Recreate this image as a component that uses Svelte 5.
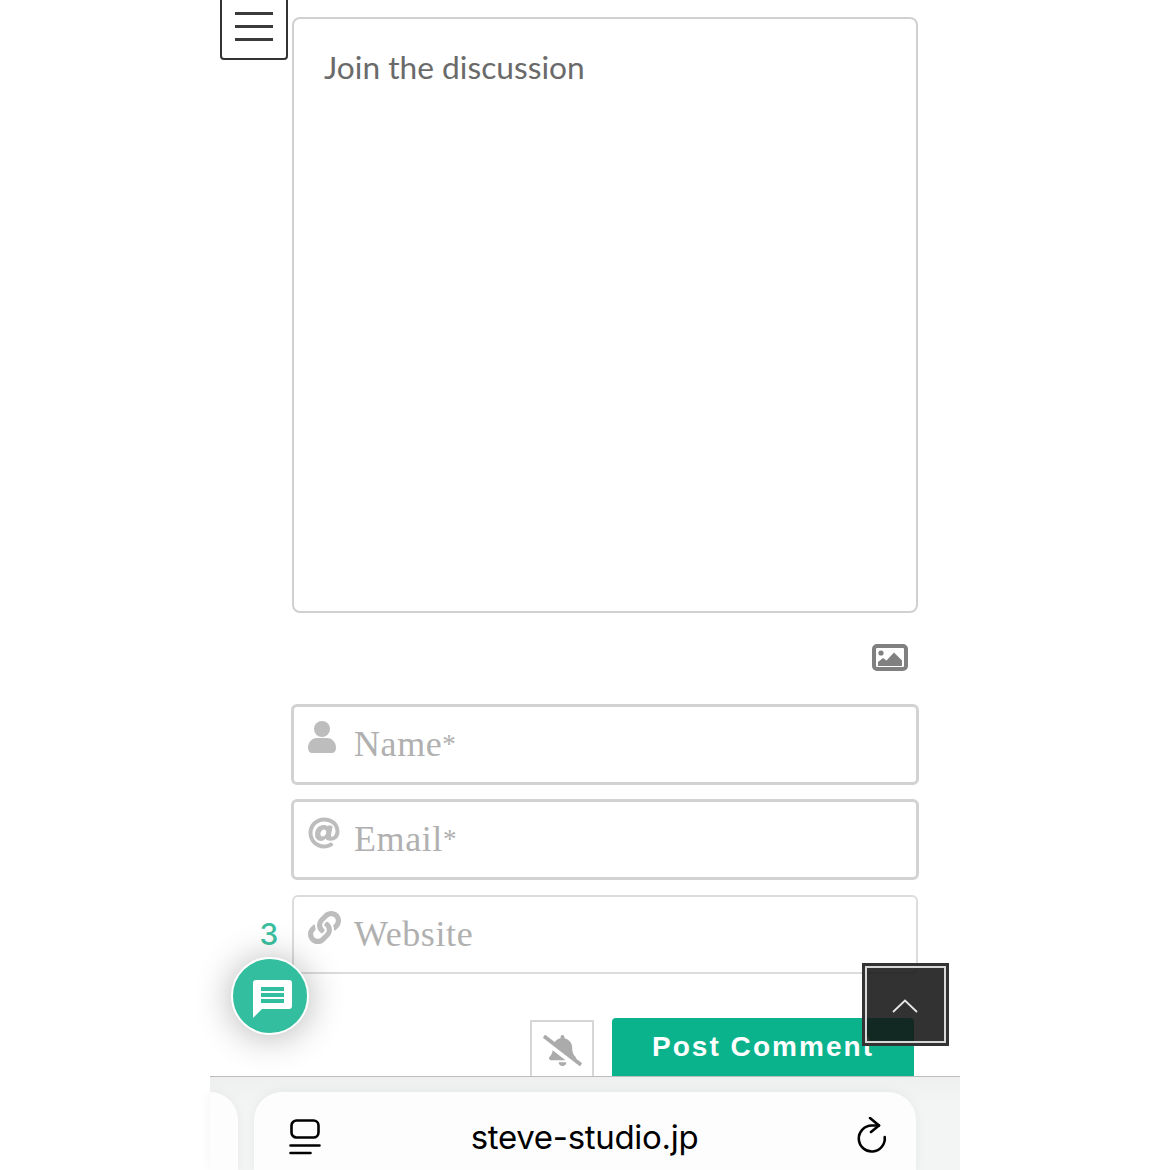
<script>
  const fields = [
    { label: "Name", star: true, icon: "user", cls: "strong" },
    { label: "Email", star: true, icon: "at", cls: "strong" },
    { label: "Website", star: false, icon: "link", cls: "light" },
  ];
</script>

<div class="page">
  <div class="phone">
    <main class="content">
      <div class="form">
        <div class="textarea">Join the discussion</div>

        <div class="attach">
          <svg width="36" height="27" viewBox="0 0 36 27">
            <rect x="2" y="2" width="32" height="23" rx="3" fill="none" stroke="#808080" stroke-width="4" />
            <circle cx="9" cy="9" r="2.6" fill="#808080" />
            <path d="M6 22v-4l5-4 3.500 2.500L22 8.500l8 8v5.500z" fill="#808080" />
          </svg>
        </div>

        {#each fields as f}
          <div class="field {f.cls}">
            <span class="ico">
              {#if f.icon === "user"}
                <svg width="28" height="32" viewBox="0 0 28 32" fill="#bdbdbd">
                  <circle cx="14" cy="8" r="8" />
                  <path d="M0 27c0-7 5-10 9-10h10c4 0 9 3 9 10 0 3-2 5-4 5H4c-2 0-4-2-4-5z" />
                </svg>
              {:else if f.icon === "at"}
                <svg class="at" width="32" height="32" viewBox="0 0 512 512" fill="#bdbdbd">
                  <path d="M256 8C118.941 8 8 118.919 8 256c0 137.059 110.919 248 248 248 48.154 0 95.342-14.14 135.408-40.223 12.005-7.815 14.625-24.288 5.552-35.372l-10.177-12.433c-7.671-9.371-21.179-11.667-31.373-5.129C325.92 429.757 291.314 440 256 440c-101.458 0-184-82.542-184-184S154.542 72 256 72c100.139 0 184 57.619 184 160 0 38.786-21.093 79.742-58.17 83.693-17.349-.454-16.91-12.857-13.476-30.024l23.433-121.11C394.653 149.75 383.308 136 368.225 136h-44.981a13.518 13.518 0 0 0-13.432 11.993l-.01.092c-14.697-17.901-40.448-21.775-59.971-21.775-74.58 0-137.831 62.234-137.831 151.46 0 65.303 36.785 105.87 96 105.87 26.984 0 57.369-15.637 74.991-38.333 9.522 34.104 40.613 34.103 70.71 34.103C462.609 379.41 504 307.798 504 232 504 95.653 394.023 8 256 8zm-21.68 304.43c-22.249 0-36.07-15.623-36.07-40.771 0-44.993 30.779-72.729 58.63-72.729 22.292 0 35.601 15.241 35.601 40.77 0 45.061-33.875 72.73-58.161 72.73z" />
                </svg>
              {:else}
                <svg width="33" height="33" viewBox="0 0 512 512" fill="#bdbdbd">
                  <path d="M326.612 185.391c59.747 59.809 58.927 155.698.36 214.59-.11.12-.24.25-.36.37l-67.2 67.2c-59.27 59.27-155.699 59.262-214.96 0-59.27-59.26-59.27-155.7 0-214.96l37.106-37.106c9.84-9.84 26.786-3.3 27.294 10.606.648 17.722 3.826 35.527 9.69 52.721 1.986 5.822.567 12.262-3.783 16.612l-13.087 13.087c-28.026 28.026-28.905 73.66-1.155 101.96 28.024 28.579 74.086 28.749 102.325.51l67.2-67.19c28.191-28.191 28.073-73.757 0-101.83-3.701-3.694-7.429-6.564-10.341-8.569a16.037 16.037 0 0 1-6.947-12.606c-.396-10.567 3.348-21.456 11.698-29.806l21.054-21.055c5.521-5.521 14.182-6.199 20.584-1.731a152.482 152.482 0 0 1 20.522 17.197zM467.547 44.449c-59.261-59.262-155.69-59.27-214.96 0l-67.2 67.2c-.12.12-.25.25-.36.37-58.566 58.892-59.387 154.781.36 214.59a152.454 152.454 0 0 0 20.521 17.196c6.402 4.468 15.064 3.789 20.584-1.731l21.054-21.055c8.35-8.35 12.094-19.239 11.698-29.806a16.037 16.037 0 0 0-6.947-12.606c-2.912-2.005-6.64-4.875-10.341-8.569-28.073-28.073-28.191-73.639 0-101.83l67.2-67.19c28.239-28.239 74.3-28.069 102.325.51 27.75 28.3 26.872 73.934-1.155 101.96l-13.087 13.087c-4.35 4.35-5.769 10.79-3.783 16.612 5.864 17.194 9.042 34.999 9.69 52.721.509 13.906 17.454 20.446 27.294 10.606l37.106-37.106c59.271-59.259 59.271-155.699.001-214.959z" />
                </svg>
              {/if}
            </span>
            <span class="ph">{f.label}{#if f.star}<small>*</small>{/if}</span>
          </div>
        {/each}

        <div class="actions">
          <div class="bell">
            <svg width="39" height="31" viewBox="0 0 640 512" fill="#ababab">
              <path d="M633.82 458.1l-90.62-70.05c.19-1.38.8-2.66.8-4.06.05-7.55-2.61-15.27-8.61-21.71-19.32-20.76-55.47-51.99-55.47-154.29 0-77.7-54.48-139.9-127.94-155.16V32c0-17.67-14.32-32-31.98-32s-31.98 14.33-31.98 32v20.84c-40.33 8.38-74.66 31.07-97.59 62.57L45.47 3.37C38.49-2.05 28.43-.8 23.01 6.18L3.37 31.45C-2.05 38.42-.8 48.47 6.18 53.9l588.35 454.73c6.98 5.43 17.03 4.17 22.46-2.81l19.64-25.27c5.42-6.97 4.17-17.02-2.81-22.45zM157.23 251.54c-8.61 67.96-36.41 93.31-52.62 110.71-6 6.45-8.66 14.16-8.61 21.71.11 16.4 12.98 32 32.1 32h241.92L157.23 251.54zM320 512c35.32 0 63.97-28.65 63.97-64H256.03c0 35.35 28.65 64 63.97 64z" />
            </svg>
          </div>
          <div class="submit">Post Comment</div>
        </div>
      </div>
    </main>

    <footer class="bar">
      <div class="tab-edge"></div>
      <div class="url">
        <svg width="32" height="36" viewBox="0 0 32 36" fill="none" stroke="#000" stroke-width="2.600" stroke-linecap="round">
          <rect x="2.500" y="1.500" width="27" height="17" rx="5" />
          <path d="M1.500 26.500h29M1.500 34h20" />
        </svg>
        <span class="host">steve-studio.jp</span>
        <svg class="reload" width="32" height="38" viewBox="0 0 32 38" fill="none" stroke="#000" stroke-width="2.600" stroke-linecap="round" stroke-linejoin="round">
          <path d="M24 8.500h-7.300A13 13 0 1 0 29.700 20" />
          <path d="M15 1l9 7.500-8 6.500" />
        </svg>
      </div>
    </footer>

    <button class="burger" aria-label="menu"><i></i><i></i><i></i></button>

    <div class="count">3</div>
    <div class="fab">
      <svg width="39" height="38" viewBox="0 0 39 38">
        <path d="M3 0h33a3 3 0 0 1 3 3v23a3 3 0 0 1-3 3H9l-9 9V3a3 3 0 0 1 3-3z" fill="#fff" />
        <path d="M8 9h23M8 15h23M8 21h23" stroke="#33bf9f" stroke-width="4" />
      </svg>
    </div>

    <div class="totop">
      <svg width="26" height="14" viewBox="0 0 26 14" fill="none" stroke="#e8e8e8" stroke-width="1.800">
        <path d="M1 13L13 1.500 25 13" />
      </svg>
    </div>
  </div>
</div>

<style>
  :global(body) {
    margin: 0;
    background: #fff;
  }

  .page {
    width: 1170px;
    height: 1170px;
    overflow: hidden;
    display: flex;
    justify-content: center;
  }

  .phone {
    position: relative;
    width: 750px;
    height: 1170px;
    display: flex;
    flex-direction: column;
  }

  .content {
    height: 1076px;
    overflow: hidden;
    padding: 17px 0 0 81px;
    box-sizing: border-box;
  }

  .form {
    width: 628px;
    display: flex;
    flex-direction: column;
  }

  .textarea {
    margin: 0 1px;
    height: 596px;
    box-sizing: border-box;
    border: 2px solid #d0d0d0;
    border-radius: 8px;
    padding: 27px 30px;
    font: 31.700px/42px Lato, sans-serif;
    color: #6a6a6a;
  }

  .attach {
    height: 91px;
    padding: 31px 11px 0 0;
    box-sizing: border-box;
    display: flex;
    justify-content: flex-end;
    align-items: flex-start;
  }

  .field {
    height: 81px;
    box-sizing: border-box;
    border: 3px solid #d2d2d2;
    border-radius: 6px;
    padding: 14px 0 0 13px;
    margin-bottom: 14px;
    display: flex;
    align-items: flex-start;
    gap: 13px;
  }

  .field.light {
    height: 79px;
    margin: 1px 1px 0;
    border: 2px solid #dcdcdc;
  }

  .ico {
    width: 34px;
    height: 34px;
    flex: none;
  }

  .ico svg {
    display: block;
    margin-left: 1px;
  }

  .ico svg.at {
    margin-top: 1px;
  }

  .ph {
    font: 36px/46px "Liberation Serif", serif;
    letter-spacing: 0.6px;
    color: #b0b0b0;
  }

  .ph small {
    font-size: 27px;
    vertical-align: 3px;
  }

  .actions {
    display: flex;
    justify-content: flex-end;
    align-items: flex-start;
    gap: 18px;
    padding: 44px 5px 0 0;
  }

  .bell {
    width: 64px;
    height: 70px;
    margin-top: 2px;
    box-sizing: border-box;
    border: 2px solid #d6d6d6;
    padding-top: 13px;
    display: flex;
    justify-content: center;
    align-items: flex-start;
  }

  .submit {
    width: 302px;
    height: 70px;
    box-sizing: border-box;
    padding-top: 11px;
    border-radius: 4px;
    background: #0bb38d;
    color: #fff;
    text-align: center;
    font: bold 28px/36px "Liberation Sans", sans-serif;
    letter-spacing: 2.050px;
  }

  .bar {
    flex: 1;
    border-top: 1px solid #bcbcbc;
    background: linear-gradient(#eef0f0, #f3f5f5 30%);
    display: flex;
    gap: 16px;
    padding-top: 15px;
    padding-right: 44px;
    box-sizing: border-box;
  }

  .tab-edge {
    width: 28px;
    background: #fdfdfd;
    border-radius: 0 28px 0 0;
    box-shadow: 0 0 12px rgba(0, 0, 0, 0.05);
  }

  .url {
    flex: 1;
    background: #fdfdfd;
    border-radius: 28px 28px 0 0;
    box-shadow: 0 0 12px rgba(0, 0, 0, 0.05);
    display: flex;
    justify-content: space-between;
    align-items: flex-start;
    padding: 27px 29px 0 35px;
  }

  .host {
    font: 33px/44px Inter, sans-serif;
    color: #000;
    margin: -4px 7px 0 0;
    letter-spacing: -0.3px;
  }

  .reload {
    margin-top: -2px;
  }

  .burger {
    position: absolute;
    left: 10px;
    top: -4px;
    width: 68px;
    height: 64px;
    box-sizing: border-box;
    padding: 14px 13px 0;
    border: 2px solid #333;
    border-radius: 4px;
    background: #fff;
    display: flex;
    flex-direction: column;
    gap: 10.500px;
  }

  .burger i {
    display: block;
    height: 2.500px;
    background: #3a3a3a;
  }

  .count {
    position: absolute;
    left: 49px;
    top: 916px;
    width: 20px;
    text-align: center;
    font: 500 30px/36px Inter, sans-serif;
    color: #3cbf9f;
  }

  .fab {
    position: absolute;
    left: 21px;
    top: 957px;
    width: 78px;
    height: 78px;
    box-sizing: border-box;
    border: 2px solid #fff;
    border-radius: 50%;
    background: #33bf9f;
    box-shadow: 0 2px 36px rgba(0, 0, 0, 0.3);
    display: flex;
    align-items: center;
    justify-content: center;
    padding: 5px 0 0 4px;
  }

  .totop {
    position: absolute;
    left: 652px;
    top: 963px;
    width: 87px;
    height: 83px;
    box-sizing: border-box;
    border: 3px solid #333;
    outline: 2px solid #d8d8d8;
    outline-offset: -5px;
    background: rgba(20, 20, 20, 0.87);
    display: flex;
    justify-content: center;
    padding: 33px 2px 0 0;
  }
</style>
